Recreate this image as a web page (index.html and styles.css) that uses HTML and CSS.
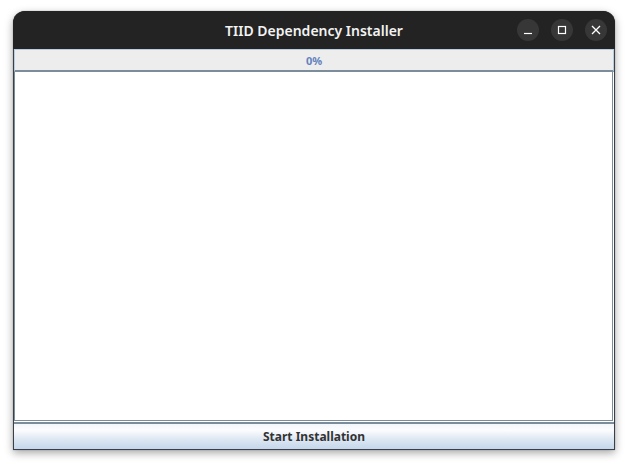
FILE: index.html
```html
<!DOCTYPE html>
<html>
<head>
<meta charset="utf-8">
<link rel="stylesheet" href="styles.css">
</head>
<body>
<div class="window">
  <div class="titlebar">
    <div class="title">TIID Dependency Installer</div>
    <div class="controls">
      <div class="ctl"><svg width="10" height="10" viewBox="0 0 10 10"><path d="M1 8.5h8" stroke="#fff" stroke-width="1.2"/></svg></div>
      <div class="ctl"><svg width="10" height="10" viewBox="0 0 10 10"><rect x="1.5" y="1.5" width="7" height="7" fill="none" stroke="#fff" stroke-width="1.2"/></svg></div>
      <div class="ctl"><svg width="10" height="10" viewBox="0 0 10 10"><path d="M1 1L9 9M9 1L1 9" stroke="#fff" stroke-width="1.3"/></svg></div>
    </div>
  </div>
  <div class="content">
    <div class="progress"><span>0%</span></div>
    <div class="log"></div>
    <div class="button">Start Installation</div>
  </div>
</div>
</body>
</html>
```
FILE: styles.css
```css
html, body {
  margin: 0;
  padding: 0;
  background: #ffffff;
}
body {
  padding: 11px 0 0 13px;
  width: 628px;
  height: 466px;
  box-sizing: border-box;
  overflow: hidden;
}
.window {
  width: 602px;
  height: 439px;
  display: flex;
  flex-direction: column;
  border-radius: 12px 12px 0 0;
  box-shadow: 0 3px 9px rgba(0,0,0,0.35), 0 0 1px rgba(0,0,0,0.5);
  background: #3d4650;
}
.titlebar {
  height: 38px;
  flex: none;
  background: #232323;
  border-radius: 12px 12px 0 0;
  display: flex;
  align-items: center;
  justify-content: center;
  position: relative;
}
.title {
  color: #f2f2f2;
  font-family: "Noto Sans", sans-serif;
  font-weight: 600;
  font-size: 14px;
  letter-spacing: 0px;
}
.controls {
  position: absolute;
  right: 8px;
  top: 8px;
  display: flex;
  gap: 12px;
}
.ctl {
  width: 22px;
  height: 22px;
  border-radius: 50%;
  background: #373737;
  display: flex;
  align-items: center;
  justify-content: center;
}
.content {
  flex: 1;
  display: flex;
  flex-direction: column;
  border: 1px solid #3a4048;
  border-top: none;
  background: #ffffff;
  min-height: 0;
}
.progress {
  flex: none;
  background: #ededed;
  border: 1px solid #b9cde0;
  border-bottom: 2px solid #7b8c9b;
  box-sizing: border-box;
  height: 23px;
  display: flex;
  align-items: center;
  justify-content: center;
  font-family: "Noto Sans", sans-serif;
  font-weight: 700;
  font-size: 11px;
  color: #6482be;
}
.log {
  flex: 1;
  background: #ffffff;
  border: 1px solid #7b8c9b;
  border-top: none;
  margin-right: 1px;
}
.button {
  flex: none;
  height: 27px;
  box-sizing: border-box;
  border-top: 2px solid #7b8c9b;
  margin-top: 1px;
  background: linear-gradient(to bottom, #f3f6fa 0%, #fbfcfe 25%, #dde8f3 60%, #c4d7ea 100%);
  display: flex;
  align-items: center;
  justify-content: center;
  font-family: "Noto Sans", sans-serif;
  font-weight: 700;
  font-size: 12px;
  color: #333333;
}
```
